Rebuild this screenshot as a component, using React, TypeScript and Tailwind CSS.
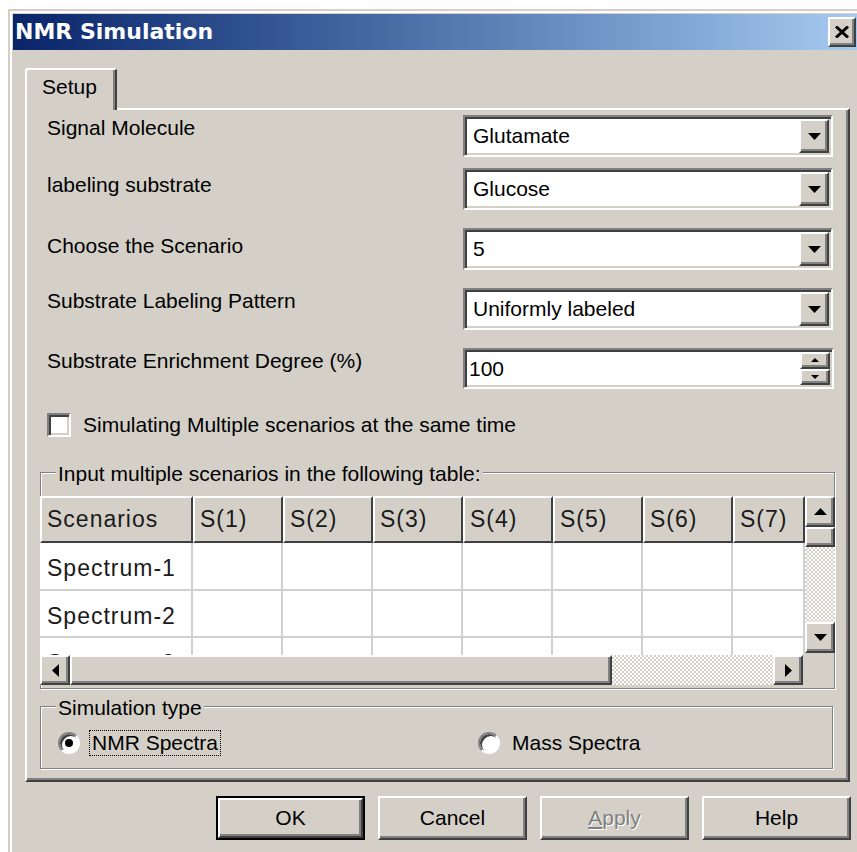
import React from "react";

const raised =
  "border-2 border-t-white border-l-white border-r-[#404040] border-b-[#404040] shadow-[inset_-2px_-2px_0_#808080] bg-[#d4d0c8]";
const sunken =
  "border-2 border-t-[#808080] border-l-[#808080] border-r-white border-b-white shadow-[inset_2px_2px_0_#404040,inset_-2px_-2px_0_#d4d0c8]";
const dither =
  "bg-[repeating-conic-gradient(#d4d0c8_0_25%,#ffffff_0_50%)] bg-[length:4px_4px]";

type Dir = "up" | "down" | "left" | "right";

function Tri({ dir, size = 13 }: { dir: Dir; size?: number }) {
  const h = Math.ceil(size / 2);
  const vertical = dir === "up" || dir === "down";
  const w = vertical ? size : h;
  const hh = vertical ? h : size;
  const pts = {
    up: `0,${h} ${size / 2},0 ${size},${h}`,
    down: `0,0 ${size},0 ${size / 2},${h}`,
    left: `${h},0 ${h},${size} 0,${size / 2}`,
    right: `0,0 ${h},${size / 2} 0,${size}`,
  }[dir];
  return (
    <svg width={w} height={hh} viewBox={`0 0 ${w} ${hh}`}>
      <polygon points={pts} fill="#000" />
    </svg>
  );
}

function ArrowButton({ dir, className }: { dir: Dir; className: string }) {
  return (
    <div className={`${raised} ${className} flex items-center justify-center shrink-0`}>
      <Tri dir={dir} />
    </div>
  );
}

function Combo({ value }: { value: string }) {
  return (
    <div className={`${sunken} w-[370px] h-[42px] bg-white flex p-[2px]`}>
      <span className="flex-1 flex items-center pl-[6px] text-[21px]">{value}</span>
      <ArrowButton dir="down" className="w-[30px]" />
    </div>
  );
}

function Spin({ value }: { value: string }) {
  return (
    <div className={`${sunken} w-[371px] h-[41px] bg-white flex p-[2px]`}>
      <span className="flex-1 flex items-center pl-[2px] text-[21px]">{value}</span>
      <div className="flex flex-col w-[30px]">
        <div className={`${raised} flex-1 flex items-center justify-center`}>
          <Tri dir="up" size={8} />
        </div>
        <div className={`${raised} flex-1 flex items-center justify-center`}>
          <Tri dir="down" size={8} />
        </div>
      </div>
    </div>
  );
}

function Field({
  label,
  h,
  pt,
  children,
}: {
  label: string;
  h: string;
  pt: string;
  children: React.ReactNode;
}) {
  return (
    <div className={`flex items-start ${h}`}>
      <div className={`w-[423px] pl-[7px] text-[21px] leading-[24px] ${pt}`}>{label}</div>
      {children}
    </div>
  );
}

function Radio({ checked }: { checked?: boolean }) {
  return (
    <div className="w-[22px] h-[22px] rounded-full border-2 border-t-[#808080] border-l-[#808080] border-r-white border-b-white shadow-[inset_2px_2px_0_#404040] bg-white flex items-center justify-center shrink-0">
      {checked && <div className="w-[8px] h-[8px] rounded-full bg-black" />}
    </div>
  );
}

const cols = [
  { name: "Scenarios", w: "w-[153px]" },
  { name: "S(1)", w: "w-[90px]" },
  { name: "S(2)", w: "w-[90px]" },
  { name: "S(3)", w: "w-[90px]" },
  { name: "S(4)", w: "w-[90px]" },
  { name: "S(5)", w: "w-[90px]" },
  { name: "S(6)", w: "w-[90px]" },
  { name: "S(7)", w: "w-[72px]" },
];

const rows = [
  { name: "Spectrum-1", h: "h-[48px]" },
  { name: "Spectrum-2", h: "h-[47px]" },
  { name: "Spectrum-3", h: "h-[47px]" },
];

function ScenarioGrid() {
  return (
    <div className="flex h-[189px] -mx-[1px] text-[23px] tracking-[1px] text-[#1a1a1a]">
      <div className="flex flex-col w-[765px]">
        <div className="h-[159px] overflow-hidden">
          <div className="flex h-[47px]">
            {cols.map((c) => (
              <div
                key={c.name}
                className={`${c.w} shrink-0 border-2 border-t-white border-l-white border-r-[#404040] border-b-[#404040] bg-[#d4d0c8] flex items-center pl-[5px] overflow-hidden whitespace-nowrap`}
              >
                {c.name}
              </div>
            ))}
          </div>
          {rows.map((r) => (
            <div key={r.name} className={`flex ${r.h}`}>
              {cols.map((c, i) => (
                <div
                  key={c.name}
                  className={`${c.w} shrink-0 bg-white border-r-2 border-b-2 border-[#d0d0d0] flex items-start pt-[8px] pl-[7px] whitespace-nowrap`}
                >
                  {i === 0 ? r.name : ""}
                </div>
              ))}
            </div>
          ))}
        </div>
        <div className="flex h-[30px]">
          <ArrowButton dir="left" className="w-[30px]" />
          <div className={`${raised} w-[542px]`} />
          <div className={`flex-1 ${dither}`} />
          <ArrowButton dir="right" className="w-[30px]" />
          <div className="w-[2px]" />
        </div>
      </div>
      <div className="flex flex-col w-[30px]">
        <ArrowButton dir="up" className="h-[31px]" />
        <div className={`${raised} h-[20px]`} />
        <div className={`flex-1 ${dither}`} />
        <ArrowButton dir="down" className="h-[31px]" />
        <div className="h-[32px]" />
      </div>
    </div>
  );
}

function Button({
  children,
  isDefault,
}: {
  children: React.ReactNode;
  isDefault?: boolean;
}) {
  const inner = (
    <div className={`${raised} w-full h-full flex items-center justify-center text-[21px]`}>
      {children}
    </div>
  );
  return isDefault ? (
    <div className="w-[149px] h-[44px] border-2 border-black">{inner}</div>
  ) : (
    <div className="w-[149px] h-[44px]">{inner}</div>
  );
}

export default function App() {
  return (
    <div className="w-[857px] h-[852px] overflow-hidden bg-white pl-[8px] pt-[9px] font-['Liberation_Sans',Arial,sans-serif] text-black">
      <div className="w-[860px] h-[900px] bg-[#d4d0c8] border-l-2 border-t-2 border-[#d4d0c8]">
        <div className="h-full border-l-2 border-t-2 border-white p-[1px]">
          {/* caption */}
          <div className="w-[845px] h-[36px] flex items-center justify-between pl-[2px] pr-[2px] bg-linear-to-r from-[#0a246a] to-[#a6caf0]">
            <span className="font-['DejaVu_Sans',sans-serif] font-bold text-[22px] text-white leading-none">
              NMR Simulation
            </span>
            <div className={`${raised} w-[28px] h-[30px] flex items-center justify-center`}>
              <svg width="14" height="12" viewBox="0 0 14 12">
                <path d="M1 0.5 L13 11.5 M13 0.5 L1 11.5" stroke="#000" strokeWidth="3" />
              </svg>
            </div>
          </div>

          <div className="w-[845px] pl-[12px] pr-[8px] pt-[18px]">
            {/* tab strip */}
            <div className="relative z-10 -mb-[2px] w-[92px] h-[42px] bg-[#d4d0c8] rounded-t-[3px] border-t-2 border-l-2 border-r-2 border-t-white border-l-white border-r-[#404040] shadow-[inset_-2px_0_0_#808080] pl-[15px] pt-[5px] text-[21px] leading-[24px]">
              Setup
            </div>

            {/* tab page */}
            <div className="w-[825px] h-[674px] border-2 border-t-white border-l-white border-r-[#404040] border-b-[#404040] shadow-[inset_-2px_-2px_0_#808080] pl-[13px] pt-[5px]">
              <Field label="Signal Molecule" h="h-[53px]" pt="pt-[1px]">
                <Combo value="Glutamate" />
              </Field>
              <Field label="labeling substrate" h="h-[60px]" pt="pt-[5px]">
                <Combo value="Glucose" />
              </Field>
              <Field label="Choose the Scenario" h="h-[60px]" pt="pt-[6px]">
                <Combo value="5" />
              </Field>
              <Field label="Substrate Labeling Pattern" h="h-[60px]" pt="pt-[1px]">
                <Combo value="Uniformly labeled" />
              </Field>
              <Field label="Substrate Enrichment Degree (%)" h="h-[41px]" pt="pt-[1px]">
                <Spin value="100" />
              </Field>

              <div className="flex items-center gap-[12px] pl-[7px] mt-[24px] h-[24px]">
                <div className={`${sunken} w-[24px] h-[24px] bg-white shrink-0`} />
                <span className="text-[21px] leading-[24px]">
                  Simulating Multiple scenarios at the same time
                </span>
              </div>

              {/* scenarios table group */}
              <div className="relative mt-[35px] w-[795px] border border-[#808080] shadow-[inset_1px_1px_0_#fff,1px_1px_0_#fff] pt-[23px] pb-[3px]">
                <span className="absolute -top-[11px] left-[15px] px-[2px] bg-[#d4d0c8] text-[21px] leading-[24px]">
                  Input multiple scenarios in the following table:
                </span>
                <ScenarioGrid />
              </div>

              {/* simulation type group */}
              <div className="relative mt-[17px] w-[793px] h-[63px] border border-[#808080] shadow-[inset_1px_1px_0_#fff,1px_1px_0_#fff] pt-[23px] pl-[17px]">
                <span className="absolute -top-[11px] left-[15px] px-[2px] bg-[#d4d0c8] text-[21px] leading-[24px]">
                  Simulation type
                </span>
                <div className="flex items-center h-[26px]">
                  <div className="flex items-center w-[420px]">
                    <Radio checked />
                    <span className="ml-[9px] px-[2px] border border-dotted border-black text-[21px] leading-[24px]">
                      NMR Spectra
                    </span>
                  </div>
                  <div className="flex items-center">
                    <Radio />
                    <span className="ml-[12px] text-[21px] leading-[24px]">Mass Spectra</span>
                  </div>
                </div>
              </div>
            </div>

            {/* dialog buttons */}
            <div className="flex justify-end gap-[13px] mt-[14px] -mr-[1px]">
              <Button isDefault>OK</Button>
              <Button>Cancel</Button>
              <Button>
                <span className="text-[#808080] [text-shadow:1px_1px_0_#fff]">
                  <span className="underline">A</span>pply
                </span>
              </Button>
              <Button>Help</Button>
            </div>
          </div>
        </div>
      </div>
    </div>
  );
}
